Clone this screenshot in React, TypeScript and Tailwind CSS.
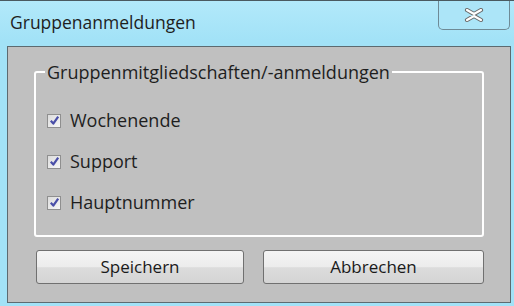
import React from "react";

const items = ["Wochenende", "Support", "Hauptnummer"];

function Check() {
  return (
    <span className="flex h-[14px] w-[14px] shrink-0 items-center justify-center border border-[#8f8f8f] bg-gradient-to-br from-[#dcdcdc] to-[#f7f7f7]">
      <svg width="11" height="11" viewBox="0 0 11 11">
        <path d="M1.8 5.8 L4.3 8.6 L9.2 1.6" fill="none" stroke="#4a4fa8" strokeWidth="2.2" strokeLinejoin="round" />
      </svg>
    </span>
  );
}

function Button({ label }: { label: string }) {
  return (
    <button className="flex h-[34px] items-center justify-center rounded-[3px] border border-[#707070] bg-[linear-gradient(#f4f4f4_0%,#ececec_50%,#dcdcdc_52%,#d4d4d4_100%)] text-[17px] text-[#1a1a1a]">
      {label}
    </button>
  );
}

export default function App() {
  return (
    <div className="flex h-[306px] w-[514px] flex-col border-t border-[#4a5a60] bg-[linear-gradient(#b2e9fa,#a2e2f7_40px,#a2e2f7)] font-['Open_Sans',sans-serif]">
      <div className="flex h-[45px] shrink-0 items-start justify-between">
        <span className="pl-[10px] pt-[8px] text-[17.5px] text-[#1e1e1e]">Gruppenanmeldungen</span>
        <div className="mr-[4px] flex h-[29px] w-[72px] items-center justify-center rounded-b-[5px] border border-t-0 border-[#6e8a96] bg-[#ace5f8]">
          <svg width="20" height="14" viewBox="0 0 20 14">
            <path
              d="M3 2 L10 6 L17 2 M3 12 L10 8 L17 12"
              fill="none"
              stroke="#6a6a6a"
              strokeWidth="4.2"
              strokeLinecap="round"
            />
            <path
              d="M3 2 L10 6 L17 2 M3 12 L10 8 L17 12"
              fill="none"
              stroke="#ffffff"
              strokeWidth="2.2"
              strokeLinecap="round"
            />
          </svg>
        </div>
      </div>
      <div className="mb-[3px] ml-[7px] mr-[3px] flex flex-1 flex-col border border-[#5d6a70] bg-[#c0c0c0] px-[26px] pt-[14px]">
        <fieldset className="h-[176px] rounded-[3px] border-2 border-white">
          <legend className="ml-[9px] px-[2px] text-[18px] leading-[22px] text-[#1e1e1e]">
            Gruppenmitgliedschaften/-anmeldungen
          </legend>
          <div className="flex flex-col gap-[18px] pl-[11px] pt-[26px]">
            {items.map((label) => (
              <label key={label} className="flex h-[23px] items-center gap-[9px] text-[18px] text-[#1e1e1e]">
                <Check />
                {label}
              </label>
            ))}
          </div>
        </fieldset>
        <div className="mt-[13px] grid grid-cols-[208px_221px] justify-between pl-[2px]">
          <Button label="Speichern" />
          <Button label="Abbrechen" />
        </div>
      </div>
    </div>
  );
}
